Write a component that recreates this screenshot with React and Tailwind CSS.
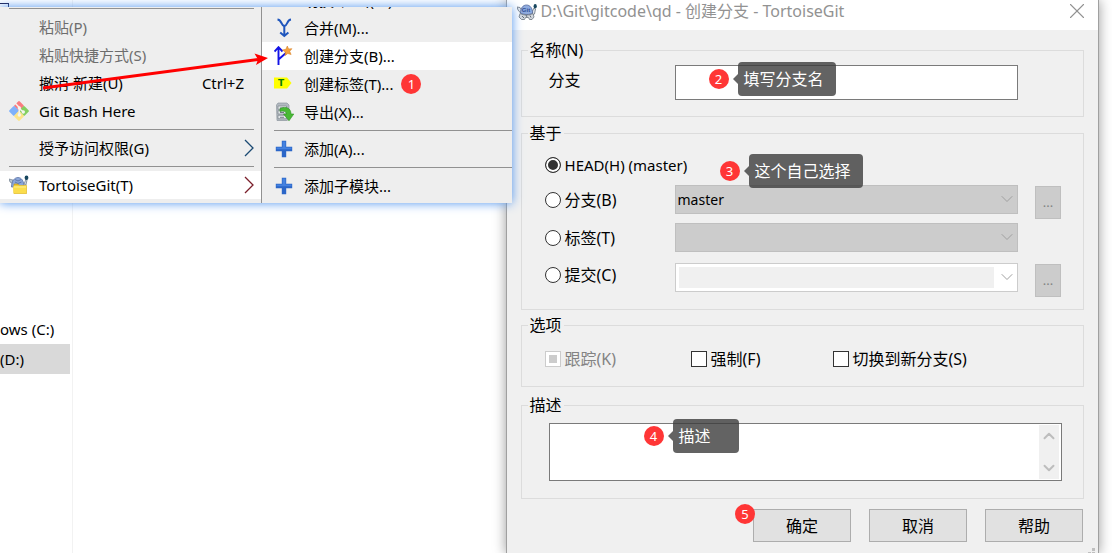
import { useState } from "react"
import { ChevronDown, ChevronUp, X } from "lucide-react"

// =========================
// ICONS
// =========================
function GitBashIcon() {
  return (
    <svg width="20" height="20" viewBox="0 0 20 20">
      <rect x="6.2" y="1.2" width="7.6" height="7.6" rx="1.2" transform="rotate(45 10 5)" fill="#fa7b7f" />
      <rect x="1.2" y="6.2" width="7.6" height="7.6" rx="1.2" transform="rotate(45 5 10)" fill="#7fb1fb" />
      <rect x="11.2" y="6.2" width="7.6" height="7.6" rx="1.2" transform="rotate(45 15 10)" fill="#84cf60" />
      <rect x="6.2" y="11.2" width="7.6" height="7.6" rx="1.2" transform="rotate(45 10 15)" fill="#fde48a" />
      <path d="M6 2l4.300 4.500v8M10.300 7.500l4 3.500" stroke="#f4f4ee" strokeWidth="1.500" fill="none" />
      <circle cx="10.300" cy="7" r="1.700" fill="#f4f4ee" />
      <circle cx="10.300" cy="14" r="1.700" fill="#f4f4ee" />
      <circle cx="14.300" cy="11" r="1.700" fill="#f4f4ee" />
    </svg>
  )
}

function TortoiseFolderIcon() {
  return (
    <svg width="20" height="20" viewBox="0 0 20 20">
      <path d="M0 4l4 1v4L1 7z" fill="#b9c6d4" stroke="#71808f" strokeWidth=".7" />
      <path d="M2.500 12c0-6 3-9.500 6.500-9.500S15 6 15 12z" fill="#8ba6d8" stroke="#5a72a5" strokeWidth=".8" />
      <path d="M15 9l2-5 1 1-1 5z" fill="#cfd8e2" stroke="#6a7785" strokeWidth=".7" />
      <ellipse cx="17.500" cy="2.800" rx="1.900" ry="2.300" fill="#17465e" />
      <path d="M6 4.500l3 1.500 3-1.500M6 7l3 1.500L12.500 7" stroke="#536ca5" strokeWidth=".8" fill="none" />
      <path d="M5 9h4l1 1.500h7.500V18.500H5z" fill="#e5bd2a" stroke="#c79b1b" strokeWidth=".6" />
      <path d="M4 12l1-1.500h12.500V18.500H4.500z" fill="#fbdd4c" />
      <path d="M5 12h12" stroke="#fff08b" strokeWidth="1" />
    </svg>
  )
}

function TortoiseIcon() {
  return (
    <svg width="20" height="16" viewBox="0 0 20 16">
      <path d="M0 3l3 .5 2 3-1 3L1 6z" fill="#dfe4ea" stroke="#66707c" strokeWidth=".8" />
      <path d="M15 8l2-4 1.500 1-1 5-2 1z" fill="#dfe4ea" stroke="#66707c" strokeWidth=".8" />
      <ellipse cx="18.200" cy="2.200" rx="1.600" ry="2.200" fill="#17465e" />
      <path d="M3.500 9C3.500 4 6 1 9.500 1s6 3 6 8c-2 2-9 2-12 0z" fill="#8fabdf" stroke="#4f6699" strokeWidth=".8" />
      <path d="M3 9.500c3 2 10 2 13 0l1 3.500-2 2.500h-2.500l-1-2H8.500l-1 2H4.500L2 13z" fill="#d3d8de" stroke="#6b747e" strokeWidth=".8" />
      <path d="M5 12l2 2M9 11l1 2M13 11.500l1 2" stroke="#59626d" strokeWidth=".9" />
      <text x="4.800" y="7.800" fontSize="6" fontWeight="700" fontFamily="Liberation Sans, sans-serif" fill="#2e4d92">Git</text>
    </svg>
  )
}

function MergeIcon() {
  return (
    <svg width="20" height="20" viewBox="0 0 20 20" fill="none" stroke="#1f56bd" strokeWidth="2">
      <path d="M3.500 1.500c2 .2 2.800 1.200 3.800 3.300C8.300 7 9 7.800 10.300 8c1.400-.2 2-1 3-3.200 1-2.100 1.800-3.100 3.700-3.300" />
      <path d="M10.300 8v10M6.200 14.500l4.100 3.500 4.100-3.500" />
    </svg>
  )
}

function BranchIcon() {
  return (
    <svg width="20" height="20" viewBox="0 0 20 20">
      <path d="M4.500 19V1.500M.5 5.500l4-4.300 4 4.300M4.500 13.500L12.500 6.500" stroke="#1313e6" strokeWidth="1.900" fill="none" />
      <path d="M13.300 0l1.300 3 3.300-.3-2.200 2.600 1.400 3.200-3.300-1-2.700 2 .2-3.500-2.800-2 3.400-.7z" fill="#f5a13f" stroke="#d98328" strokeWidth=".6" />
    </svg>
  )
}

function TagIcon() {
  return (
    <svg width="20" height="20" viewBox="0 0 20 20">
      <path d="M0 3.500h13l4.500 5.500L13 14.500H0z" fill="#ffff00" />
      <text x="4" y="12.300" fontSize="9" fontWeight="700" fontFamily="DejaVu Sans, sans-serif" fill="#0a7a0a">T</text>
    </svg>
  )
}

function ExportIcon() {
  return (
    <svg width="20" height="20" viewBox="0 0 20 20">
      <path d="M4 1h9l2 2v14l-2 1.500H3L2.500 3z" fill="#b2b9c0" stroke="#8d959d" strokeWidth=".7" />
      <path d="M4 4h8.500v3.300H4zM4 8.700h8.500V12H4zM4 13.300h8.500v3.400H4z" fill="#e1e5e8" stroke="#7e868e" strokeWidth=".7" />
      <path d="M6 6h4M6 10.500h4M6 15.300h4" stroke="#737b83" strokeWidth="1" />
      <path d="M6 6.500c6-2.500 11-.5 11 5.500h2.800L15 18.800 9.500 12h3C12 9.500 10 8.500 6 9.500z" fill="#48b934" stroke="#2c9220" strokeWidth=".6" />
    </svg>
  )
}

function PlusIcon() {
  return (
    <svg width="20" height="20" viewBox="0 0 20 20">
      <path d="M7.800 1.800h4.400v6h6v4.400h-6v6H7.800v-6h-6V7.800h6z" fill="#2b66c8" />
      <path d="M8.500 2.500h3v6h6v1.700H2.500V8.500h6z" fill="#4582e0" />
    </svg>
  )
}

function SubmenuArrow({ color }) {
  return (
    <svg width="10" height="18" viewBox="0 0 10 18" fill="none" stroke={color} strokeWidth="1.3">
      <path d="M1 1l8 8-8 8" />
    </svg>
  )
}

// =========================
// CALLOUTS
// =========================
function Badge({ n }) {
  return (
    <span className="flex h-5 w-5 shrink-0 items-center justify-center rounded-full bg-[#ff3636] text-[13px] leading-5 text-white">
      {n}
    </span>
  )
}

function Note({ n, text, place, pad = "pr-3" }) {
  return (
    <div className={`pointer-events-none absolute z-10 flex items-center ${place}`}>
      <Badge n={n} />
      <span className="ml-1 border-y-[5px] border-r-[5px] border-y-transparent border-r-[#3c3c3c]/80" />
      <span className={`h-[34px] whitespace-nowrap rounded bg-[#3c3c3c]/80 pl-1.5 text-base leading-[34px] text-white ${pad}`}>
        {text}
      </span>
    </div>
  )
}

// =========================
// MENUS
// =========================
const leftMenu = [
  { sep: true },
  { text: "粘贴(P)", disabled: true },
  { text: "粘贴快捷方式(S)", disabled: true },
  { text: "撤消 新建(U)", keys: "Ctrl+Z" },
  { text: "Git Bash Here", icon: <GitBashIcon /> },
  { sep: true },
  { text: "授予访问权限(G)", arrow: "#1b4a73" },
  { sep: true },
  { text: "TortoiseGit(T)", icon: <TortoiseFolderIcon />, arrow: "#7a1f2b", active: true }
]

const rightMenu = [
  { text: "切换/检出(W)..." },
  { text: "合并(M)...", icon: <MergeIcon /> },
  { text: "创建分支(B)...", icon: <BranchIcon />, active: true },
  { text: "创建标签(T)...", icon: <TagIcon />, badge: 1 },
  { text: "导出(X)...", icon: <ExportIcon /> },
  { sep: true },
  { text: "添加(A)...", icon: <PlusIcon /> },
  { sep: true },
  { text: "添加子模块...", icon: <PlusIcon /> }
]

function MenuItem({ item, sub }) {
  if (item.sep) {
    return (
      <li className={`flex h-[9px] items-center ${sub ? "pl-3" : "pl-[9px] pr-[7px]"}`}>
        <span className="h-px w-full bg-[#919191]" />
      </li>
    )
  }

  return (
    <li>
      <button
        disabled={item.disabled}
        className={`flex h-7 w-full items-center whitespace-nowrap text-left text-[15px] leading-7 ${
          sub ? "pl-3" : "pl-[9px] pr-[7px]"
        } ${item.active ? "bg-white" : ""} ${item.disabled ? "text-[#6d6d6d]" : "text-black"}`}
      >
        <span className="mr-2.5 h-5 w-5 shrink-0">{item.icon}</span>
        <span>{item.text}</span>
        {item.badge && <span className="ml-2"><Badge n={item.badge} /></span>}
        {item.keys && <span className="ml-auto mr-2.5">{item.keys}</span>}
        {item.arrow && <span className="ml-auto"><SubmenuArrow color={item.arrow} /></span>}
      </button>
    </li>
  )
}

function ContextMenus() {
  return (
    <div className="absolute left-0 top-[7px] z-20 flex bg-[#eeeeee] shadow-[0_0_10px_#4f94ee]">
      <ul className="-mt-[3px] w-[261px] pb-1">
        {leftMenu.map((item, i) => <MenuItem key={i} item={item} />)}
      </ul>
      <div className="w-[251px] overflow-hidden border-l border-[#919191]">
        <ul className="-mt-[21px]">
          {rightMenu.map((item, i) => <MenuItem key={i} item={item} sub />)}
        </ul>
      </div>

      <svg className="pointer-events-none absolute left-0 top-0" width="280" height="100" viewBox="0 0 280 100">
        <path d="M43 81L258 52.500" stroke="#ff0000" strokeWidth="3" />
        <path d="M268 51L254.500 46.500 258 52.500 256 58z" fill="#ff0000" />
      </svg>
    </div>
  )
}

// =========================
// DIALOG
// =========================
function Group({ title, className, children }) {
  return (
    <fieldset className={`min-w-0 border border-[#dcdcdc] ${className}`}>
      <legend className="ml-1.5 h-6 px-0.5 leading-6">{title}</legend>
      {children}
    </fieldset>
  )
}

function BaseRadio({ id, label, value, onChange, className }) {
  return (
    <label className={`flex items-center gap-1 whitespace-nowrap ${className}`}>
      <input
        type="radio"
        name="base"
        checked={value === id}
        onChange={() => onChange(id)}
        className="h-4 w-4 appearance-none rounded-full border border-[#333333] bg-white checked:bg-[#333333] checked:shadow-[inset_0_0_0_2px_white]"
      />
      {label}
    </label>
  )
}

function Combo({ label, options, disabled, children }) {
  return (
    <div className="relative h-[29px]">
      <select
        aria-label={label}
        disabled={disabled}
        className={`h-full w-full appearance-none border pl-0.5 text-sm text-black opacity-100 ${
          disabled ? "border-[#bfbfbf] bg-[#cccccc]" : "border-[#cccccc] bg-white"
        }`}
      >
        {options.map(o => <option key={o}>{o}</option>)}
      </select>
      {children}
      <ChevronDown size={20} strokeWidth={1.2} className="pointer-events-none absolute right-px top-1 text-[#a0a0a0]" />
    </div>
  )
}

function MoreButton() {
  return (
    <button
      aria-label="..."
      disabled
      className="ml-[17px] mt-px h-[33px] border border-[#bfbfbf] bg-[#cccccc] text-[13px] leading-[31px] text-[#838383]"
    >
      ...
    </button>
  )
}

function Check({ label, disabled }) {
  return (
    <label className={`flex h-6 items-center gap-1 whitespace-nowrap ${disabled ? "text-[#838383]" : ""}`}>
      <input
        type="checkbox"
        disabled={disabled}
        className={`h-4 w-4 appearance-none border ${
          disabled
            ? "border-[#cccccc] bg-[#cccccc] shadow-[inset_0_0_0_3px_white]"
            : "border-[#333333] bg-white checked:bg-[#333333] checked:shadow-[inset_0_0_0_3px_white]"
        }`}
      />
      {label}
    </label>
  )
}

const row = "grid grid-cols-[130px_1fr_43px] items-start"

function BranchDialog() {
  const [base, setBase] = useState("head")

  return (
    <div className="relative flex flex-col border-x border-[#a0a0a0] bg-[#f0f0f0] text-base text-black shadow-[0_0_12px_rgba(0,0,0,0.4)]">
      {/* TITLE */}
      <header className="flex h-[30px] items-start bg-white pl-2.5 pr-2 leading-[22px] text-[#929292]">
        <span className="mr-1 pt-1"><TortoiseIcon /></span>
        <span className="whitespace-nowrap">D:\Git\gitcode\qd - 创建分支 - TortoiseGit</span>
        <button aria-label="X" className="-mt-0.5 ml-auto">
          <X size={26} strokeWidth={1} />
        </button>
      </header>

      <form className="px-3.5 pt-2" onSubmit={e => e.preventDefault()}>
        {/* NAME */}
        <Group title="名称(N)" className="pb-4">
          <div className={`relative pl-[23px] pr-[22px] pt-[3px] ${row}`}>
            <label htmlFor="name" className="pl-1 leading-[30px]">分支</label>
            <div className="relative">
              <input id="name" className="block h-[35px] w-full border border-[#7a7a7a] bg-white px-1" />
              <Note n={2} text="填写分支名" place="left-[34px] -top-[3px]" />
            </div>
          </div>
        </Group>

        {/* BASE */}
        <Group title="基于" className="mt-1 pb-3">
          <div className="relative flex flex-col gap-1 pl-[23px] pr-[22px]">
            <BaseRadio id="head" label="HEAD(H) (master)" value={base} onChange={setBase} className="-mb-1 h-10 text-[15px]" />
            <div className={`h-[34px] ${row}`}>
              <BaseRadio id="branch" label="分支(B)" value={base} onChange={setBase} className="h-[29px]" />
              <Combo label="分支(B)" options={["master"]} disabled />
              <MoreButton />
            </div>
            <div className={`h-9 ${row}`}>
              <BaseRadio id="tag" label="标签(T)" value={base} onChange={setBase} className="h-[29px]" />
              <Combo label="标签(T)" options={[""]} disabled />
            </div>
            <div className={`h-[34px] ${row}`}>
              <BaseRadio id="commit" label="提交(C)" value={base} onChange={setBase} className="h-6" />
              <Combo label="提交(C)" options={[""]}>
                <span className="pointer-events-none absolute inset-y-1 left-1 right-6 bg-[#f0f0f0]" />
              </Combo>
              <MoreButton />
            </div>
            <Note n={3} text="这个自己选择" place="left-[198px] top-[9px]" />
          </div>
        </Group>

        {/* OPTIONS */}
        <Group title="选项" className="mt-[3px] pb-[15px]">
          <div className="grid grid-cols-[146px_142px_1fr] px-[23px] pt-2.5">
            <Check label="跟踪(K)" disabled />
            <Check label="强制(F)" />
            <Check label="切换到新分支(S)" />
          </div>
        </Group>

        {/* DESCRIPTION */}
        <Group title="描述" className="mt-1.5 pb-[17px]">
          <div className="relative ml-[27px] mr-[21px] mt-1.5 flex h-[58px] border border-[#7a7a7a] bg-white p-px">
            <textarea aria-label="描述" className="h-full flex-1 resize-none bg-white px-1 outline-none" />
            <div className="mr-px flex w-5 flex-col items-center justify-between bg-[#f0f0f0] py-0.5 text-[#bdbdbd]">
              <ChevronUp size={18} strokeWidth={2.6} />
              <ChevronDown size={18} strokeWidth={2.6} />
            </div>
            <Note n={4} text="描述" place="left-[94px] -top-[5px]" pad="pr-7" />
          </div>
        </Group>

        {/* BUTTONS */}
        <div className="mt-2.5 flex justify-end gap-[18px] pb-3 pr-px">
          <div className="relative">
            <button className="h-[33px] w-[98px] border border-[#adadad] bg-[#e1e1e1]">确定</button>
            <span className="absolute -left-[18px] -top-[5px]"><Badge n={5} /></span>
          </div>
          <button type="button" className="h-[33px] w-[98px] border border-[#adadad] bg-[#e1e1e1]">取消</button>
          <button type="button" className="h-[33px] w-[98px] border border-[#adadad] bg-[#e1e1e1]">帮助</button>
        </div>
      </form>

      <svg className="absolute bottom-0 right-[3px]" width="7" height="6" viewBox="0 0 7 6" fill="#bfbfbf">
        <path d="M4 0h3v3H4zM0 4h3v2H0zM4 4h3v2H4z" />
      </svg>
    </div>
  )
}

// =========================
// EXPLORER
// =========================
function Explorer() {
  return (
    <div className="flex overflow-hidden text-[15px] text-black">
      <nav className="w-[73px] border-r border-[#f2f2f2] pt-[314px] leading-[30px]">
        <a href="#c" className="block w-[70px] whitespace-nowrap">ows (C:)</a>
        <a href="#d" className="block w-[70px] whitespace-nowrap bg-[#d9d9d9]">(D:)</a>
      </nav>
      <span className="absolute left-0 top-[3px] h-1 w-[9px] border-r border-t border-[#1a1a4a]" />
    </div>
  )
}

export default function App() {
  return (
    <div className="relative grid min-h-screen grid-cols-[46fr_54fr_13px] overflow-hidden bg-white font-['Noto_Sans','Noto_Sans_CJK_SC',sans-serif]">
      <Explorer />
      <BranchDialog />
      <ContextMenus />
    </div>
  )
}
